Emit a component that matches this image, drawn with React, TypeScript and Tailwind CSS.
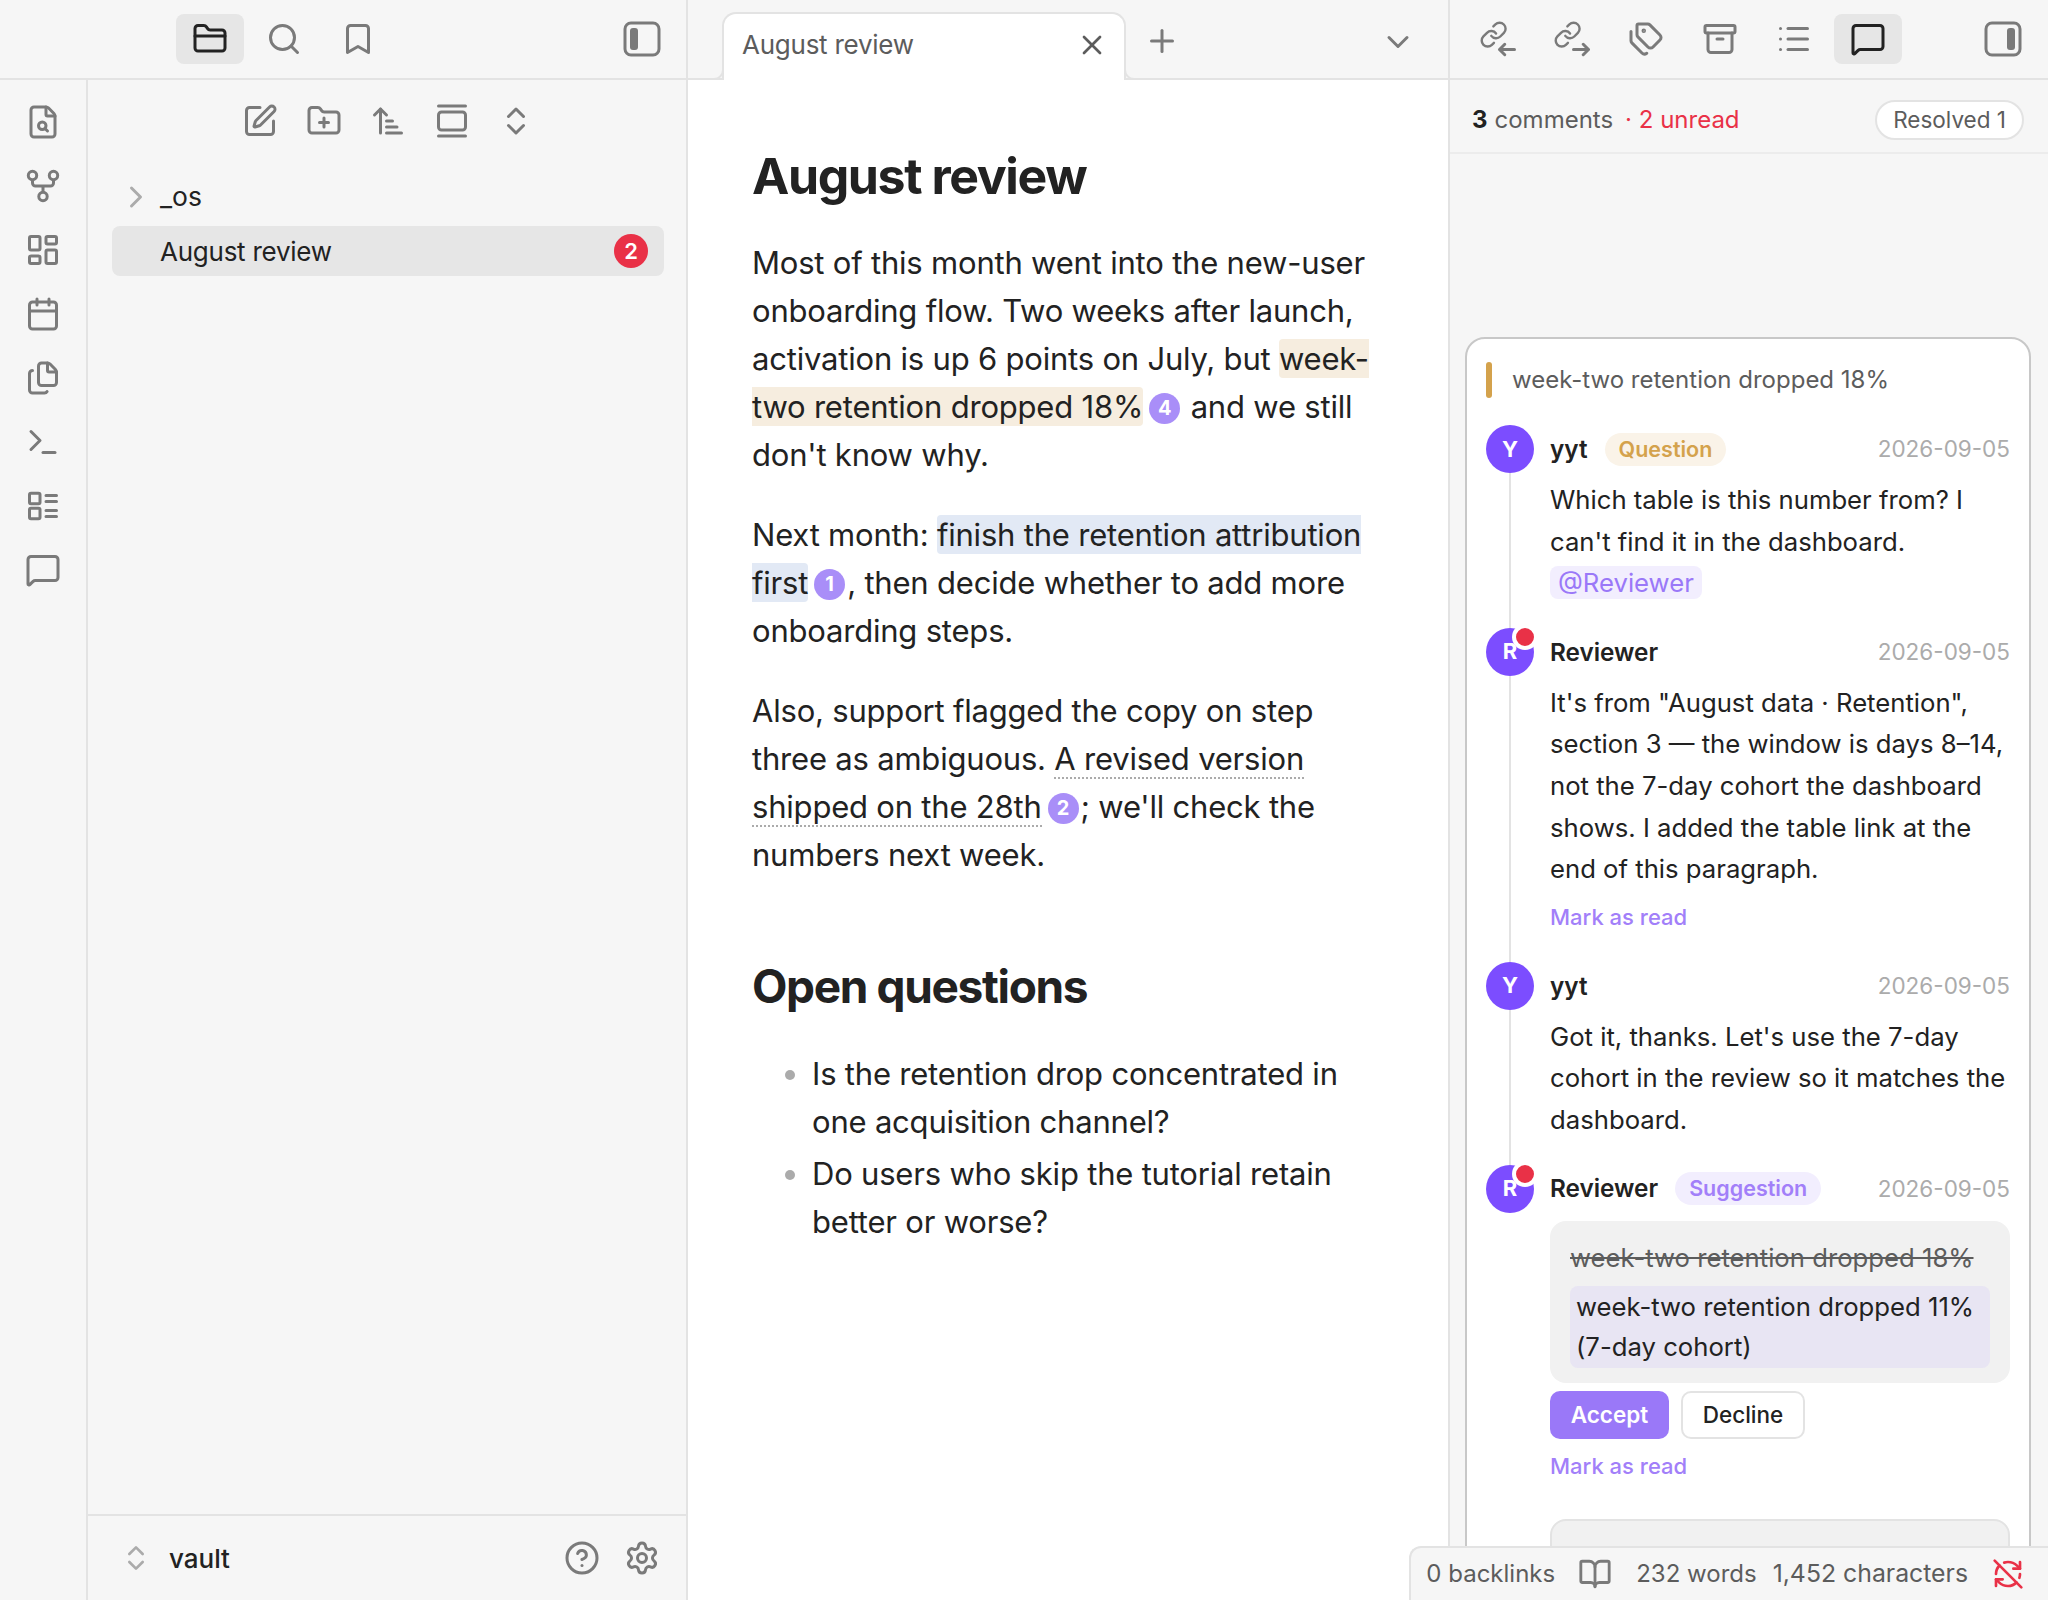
import React from "react";
import {
  FolderClosed, Search, Bookmark, FileSearch, LayoutDashboard, Calendar, Files, Terminal, MessageSquare,
  SquarePen, FolderPlus, ArrowUpNarrowWide, GalleryVertical, ChevronsUpDown, ChevronRight, X, Plus, ChevronDown,
  Tags, Archive, List, CircleHelp, Settings, BookOpen, RefreshCwOff,
} from "lucide-react";

const ic = "text-[#7a7a7a]";

function Toggle({ right }: { right?: boolean }) {
  return (
    <svg width="38" height="36" viewBox="0 0 38 36" fill="none" className={ic}>
      <rect x="2" y="2" width="34" height="32" rx="6" stroke="currentColor" strokeWidth="3" />
      <rect x={right ? 23 : 7} y="7" width="8" height="22" rx="3" fill="currentColor" />
    </svg>
  );
}

function Graph() {
  return (
    <svg width="36" height="36" viewBox="0 0 24 24" fill="none" stroke="currentColor" strokeWidth="2" className={ic}>
      <circle cx="5" cy="5" r="2.8" />
      <circle cx="19" cy="5" r="2.8" />
      <circle cx="12" cy="19" r="2.8" />
      <path d="M5 8v2a2 2 0 0 0 2 2h10a2 2 0 0 0 2-2V8M12 12v4" />
    </svg>
  );
}

function Outline() {
  return (
    <svg width="36" height="36" viewBox="0 0 24 24" fill="none" stroke="currentColor" strokeWidth="2" strokeLinecap="round" className={ic}>
      <rect x="3" y="3.5" width="7" height="7" rx="1" />
      <rect x="3" y="13.5" width="7" height="7" rx="1" />
      <path d="M14 5h7M14 9h7M14 15h7M14 19h7" />
    </svg>
  );
}

function LinkArrow({ out }: { out?: boolean }) {
  return (
    <svg width="36" height="36" viewBox="0 0 24 24" fill="none" stroke="currentColor" strokeWidth="2" strokeLinecap="round" strokeLinejoin="round" className={ic}>
      <g transform="translate(-0.5 -0.5) scale(0.8)">
        <path d="M10 13a5 5 0 0 0 7.54.54l3-3a5 5 0 0 0-7.07-7.07l-1.72 1.71" />
        <path d="M14 11a5 5 0 0 0-7.54-.54l-3 3a5 5 0 0 0 7.07 7.07l1.71-1.71" />
      </g>
      {out ? <path d="M13 19h10M19.5 15.5 23 19l-3.500 3.500" /> : <path d="M23 19H13M16.500 15.500 13 19l3.500 3.500" />}
    </svg>
  );
}

function HeadBtn({ active, children }: { active?: boolean; children: React.ReactNode }) {
  return (
    <div className={"flex h-[50px] w-[68px] items-center justify-center rounded-[8px] " + (active ? "bg-[#e6e6e6]" : "")}>
      {children}
    </div>
  );
}

function Badge({ n }: { n: number }) {
  return (
    <span className="ml-[6px] mr-[2px] inline-flex h-[31px] w-[31px] items-center justify-center rounded-full bg-[#a98ef8] align-[3px] text-[20px] font-bold leading-none tracking-normal text-white">
      {n}
    </span>
  );
}

function Avatar({ letter, unread, line }: { letter: string; unread?: boolean; line?: boolean }) {
  return (
    <div className="flex w-[48px] shrink-0 flex-col items-center">
      <div className="relative flex h-[48px] w-[48px] shrink-0 items-center justify-center rounded-full bg-[#7c4dff] text-[22px] font-bold text-white">
        {letter}
        {unread && (
          <span className="absolute right-[-4px] top-[-4px] h-[26px] w-[26px] rounded-full border-[4px] border-white bg-[#e93147]" />
        )}
      </div>
      {line && <div className="w-[2px] grow bg-[#e3e3e3]" />}
    </div>
  );
}

function Head({ name, tag, tagCls }: { name: string; tag?: string; tagCls?: string }) {
  return (
    <div className="flex h-[48px] items-center">
      <span className="text-[24.300px] font-semibold text-[#222222]">{name}</span>
      {tag && (
        <span className={"ml-[17px] flex h-[33px] items-center rounded-full px-[14px] text-[21.500px] font-semibold " + tagCls}>{tag}</span>
      )}
      <span className="ml-auto text-[22.500px] text-[#ababab]">2026-09-05</span>
    </div>
  );
}

function MarkRead() {
  return <div className="mt-[12px] text-[22px] font-medium leading-[30px] text-[#a27ff9]">Mark as read</div>;
}

const body = "mt-[6px] text-[25.700px] leading-[41.600px] text-[#222222]";

export default function App() {
  return (
    <div className="relative flex h-[1600px] w-[2048px] overflow-hidden bg-[#f6f6f6] [font-family:Inter,sans-serif] text-[#222222]">
      {/* Left column */}
      <div className="flex w-[688px] shrink-0 flex-col border-r-[2px] border-[#e3e3e3]">
        <div className="flex h-[80px] shrink-0 items-center border-b-[2px] border-[#e3e3e3] pl-[176px] pr-[25px]">
          <div className="flex items-center gap-[6px]">
            <HeadBtn active><FolderClosed size={36} className="text-[#222222]" strokeWidth={2} /></HeadBtn>
            <HeadBtn><Search size={36} className={ic} /></HeadBtn>
            <HeadBtn><Bookmark size={36} className={ic} /></HeadBtn>
          </div>
          <div className="ml-auto"><Toggle /></div>
        </div>
        <div className="flex min-h-0 grow">
          <div className="flex w-[88px] shrink-0 flex-col items-center gap-[28px] border-r-[2px] border-[#e3e3e3] pt-[24px]">
            <FileSearch size={36} className={ic} />
            <Graph />
            <LayoutDashboard size={36} className={ic} />
            <Calendar size={36} className={ic} />
            <Files size={36} className={ic} />
            <Terminal size={36} className={ic} />
            <Outline />
            <MessageSquare size={36} className={ic} />
          </div>
          <div className="flex min-w-0 grow flex-col">
            <div className="flex h-[82px] shrink-0 items-center justify-center gap-[28px] pl-[2px]">
              <SquarePen size={36} className={ic} />
              <FolderPlus size={36} className={ic} />
              <ArrowUpNarrowWide size={36} className={ic} />
              <GalleryVertical size={36} className={ic} />
              <ChevronsUpDown size={36} className={ic} />
            </div>
            <div className="grow pl-[24px] pr-[22px] pt-[10px]">
              <div className="flex h-[50px] items-center">
                <ChevronRight size={36} className="ml-[6px] text-[#ababab]" />
                <span className="ml-[6px] text-[26.500px] text-[#222222]">_os</span>
              </div>
              <div className="mt-[4px] flex h-[50px] items-center rounded-[8px] bg-[#e6e6e6] pl-[48px] pr-[16px]">
                <span className="text-[26px] tracking-[-0.250px] text-[#222222]">August review</span>
                <span className="ml-auto flex h-[34px] w-[34px] items-center justify-center rounded-full bg-[#e93147] text-[22px] font-semibold text-white">2</span>
              </div>
            </div>
            <div className="flex h-[86px] shrink-0 items-center border-t-[2px] border-[#e3e3e3] pl-[32px] pr-[26px]">
              <ChevronsUpDown size={32} className="text-[#ababab]" />
              <span className="ml-[17px] text-[26px] font-medium text-[#222222]">vault</span>
              <CircleHelp size={36} className={"ml-auto " + ic} />
              <Settings size={36} className={"ml-[24px] " + ic} />
            </div>
          </div>
        </div>
      </div>

      {/* Center column */}
      <div className="flex w-[760px] shrink-0 flex-col bg-white">
        <div className="flex h-[80px] shrink-0 items-end border-b-[2px] border-[#e3e3e3] bg-[#f6f6f6] pl-[34px]">
          <div className="relative z-10 mb-[-2px] flex h-[68px] w-[404px] items-center rounded-t-[14px] border-x-[2px] border-t-[2px] border-[#e3e3e3] bg-white pb-[5px] pl-[18px] pr-[16px]">
            <span className="text-[26px] tracking-[-0.250px] text-[#5c5c5c]">August review</span>
            <X size={32} className="ml-auto text-[#5c5c5c]" />
            <span className="absolute bottom-0 left-[-12px] h-[12px] w-[12px] rounded-br-[10px] border-b-[2px] border-r-[2px] border-[#e3e3e3] bg-[#f6f6f6]" />
            <span className="absolute bottom-0 right-[-12px] h-[12px] w-[12px] rounded-bl-[10px] border-b-[2px] border-l-[2px] border-[#e3e3e3] bg-[#f6f6f6]" />
          </div>
          <div className="mb-[19px] ml-[18px]"><Plus size={36} className={ic} /></div>
          <div className="mb-[18px] ml-auto mr-[32px]"><ChevronDown size={36} className={ic} /></div>
        </div>
        <div className="grow pl-[64px] pr-[64px] pt-[65px]">
          <h1 className="text-[50px] font-bold leading-[62px] tracking-[-1.400px] text-[#222222]">August review</h1>
          <div className="mt-[32px] text-[31px] leading-[48px] tracking-[-0.200px] text-[#222222]">
            <p>
              Most of this month went into the new-user onboarding flow. Two weeks after launch, activation is up 6 points on July, but{" "}
              <span className="rounded-[4px] bg-[#f6eddf] py-[1px]">week-two retention dropped 18%</span>
              <Badge n={4} /> and we still don't know why.
            </p>
            <p className="mt-[32px]">
              Next month: <span className="rounded-[4px] bg-[#e2e9f5] py-[1px]">finish the retention attribution first</span>
              <Badge n={1} />, then decide whether to add more onboarding steps.
            </p>
            <p className="mt-[32px]">
              Also, support flagged the copy on step three as ambiguous.{" "}
              <span className="border-b-[2px] border-dotted border-[#ababab]">A revised version shipped on the 28th</span>
              <Badge n={2} />; we'll check the numbers next week.
            </p>
          </div>
          <h2 className="mt-[77px] text-[46px] font-bold leading-[60px] tracking-[-1.350px] text-[#222222]">Open questions</h2>
          <ul className="ml-[60px] mt-[34px] list-disc text-[31px] leading-[48px] tracking-[-0.200px] text-[#222222] marker:text-[#ababab]">
            <li>Is the retention drop concentrated in one acquisition channel?</li>
            <li className="mt-[4px]">Do users who skip the tutorial retain better or worse?</li>
          </ul>
        </div>
      </div>

      {/* Right column */}
      <div className="flex min-w-0 grow flex-col border-l-[2px] border-[#e3e3e3]">
        <div className="flex h-[80px] shrink-0 items-center border-b-[2px] border-[#e3e3e3] pl-[14px] pr-[26px]">
          <div className="flex items-center gap-[6px]">
            <HeadBtn><LinkArrow /></HeadBtn>
            <HeadBtn><LinkArrow out /></HeadBtn>
            <HeadBtn><Tags size={36} className={ic} /></HeadBtn>
            <HeadBtn><Archive size={36} className={ic} /></HeadBtn>
            <HeadBtn><List size={36} className={ic} /></HeadBtn>
            <HeadBtn active><MessageSquare size={36} className="text-[#222222]" /></HeadBtn>
          </div>
          <div className="ml-auto"><Toggle right /></div>
        </div>
        <div className="flex h-[74px] shrink-0 items-center border-b-[2px] border-[#ececec] pl-[22px] pr-[24px] pt-[8px]">
          <span className="text-[24px] font-bold text-[#222222]">3</span>
          <span className="ml-[7px] text-[24px] text-[#5c5c5c]">comments</span>
          <span className="ml-[12px] text-[24px] text-[#e93147]">· 2 unread</span>
          <span className="ml-auto flex h-[40px] items-center rounded-full border-[2px] border-[#e3e3e3] bg-white px-[16px] text-[22.500px] text-[#5c5c5c]">Resolved 1</span>
        </div>
        <div className="min-h-0 grow overflow-hidden pl-[15px] pr-[17px] pt-[183px]">
          <div className="h-[1400px] rounded-[20px] border-[2px] border-[#c8c8c8] bg-white px-[19px] pt-[23px]">
            <div className="flex h-[36px] items-center">
              <div className="h-[36px] w-[6px] rounded-full bg-[#d4a24c]" />
              <span className="ml-[20px] text-[24px] text-[#5c5c5c]">week-two retention dropped 18%</span>
            </div>

            <div className="mt-[27px] flex gap-[16px]">
              <Avatar letter="Y" line />
              <div className="min-w-0 grow pb-[24px]">
                <Head name="yyt" tag="Question" tagCls="bg-[#faf3e8] text-[#d4a24c]" />
                <div className={body}>
                  Which table is this number from? I can't find it in the dashboard.{" "}
                  <span className="rounded-[8px] bg-[#f2eefe] px-[8px] py-[1px] text-[#9a78f8]">@Reviewer</span>
                </div>
              </div>
            </div>

            <div className="flex gap-[16px]">
              <Avatar letter="R" unread line />
              <div className="min-w-0 grow pb-[30px]">
                <Head name="Reviewer" />
                <div className={body}>
                  It's from "August data · Retention", section 3 — the window is days 8–14, not the 7-day cohort the dashboard shows. I added the table link at the end of this paragraph.
                </div>
                <MarkRead />
              </div>
            </div>

            <div className="flex gap-[16px]">
              <Avatar letter="Y" line />
              <div className="min-w-0 grow pb-[24px]">
                <Head name="yyt" />
                <div className={body}>
                  Got it, thanks. Let's use the 7-day cohort in the review so it matches the dashboard.
                </div>
              </div>
            </div>

            <div className="flex gap-[16px]">
              <Avatar letter="R" unread />
              <div className="min-w-0 grow">
                <Head name="Reviewer" tag="Suggestion" tagCls="bg-[#f2eefe] text-[#a27ff9]" />
                <div className="mt-[8px] rounded-[16px] bg-[#f1f1f1] px-[20px] pb-[15px] pt-[18px] text-[25.700px] leading-[38px]">
                  <div className="text-[#5c5c5c] line-through">week-two retention dropped 18%</div>
                  <div className="mt-[9px] rounded-[8px] bg-[#e8e5f3] px-[6px] py-[1px] leading-[40px] text-[#222222]">
                    week-two retention dropped 11% (7-day cohort)
                  </div>
                </div>
                <div className="mt-[8px] flex gap-[12px]">
                  <div className="flex h-[48px] w-[119px] items-center justify-center rounded-[10px] bg-[#9a78f8] text-[22.500px] font-semibold text-white">Accept</div>
                  <div className="flex h-[48px] w-[124px] items-center justify-center rounded-[10px] border-[2px] border-[#e3e3e3] bg-white text-[22.500px] font-medium text-[#222222]">Decline</div>
                </div>
                <MarkRead />
                <div className="mt-[38px] h-[120px] rounded-[16px] border-[2px] border-[#e3e3e3] bg-[#f1f1f1]" />
              </div>
            </div>
          </div>
        </div>
      </div>

      {/* Status bar */}
      <div className="absolute bottom-0 right-0 flex h-[54px] items-center rounded-tl-[12px] border-l-[2px] border-t-[2px] border-[#e3e3e3] bg-[#f6f6f6] pl-[15px] pr-[24px] text-[#5c5c5c]">
        <span className="text-[24px]">0 backlinks</span>
        <BookOpen size={34} className={"ml-[23px] " + ic} />
        <span className="ml-[24px] text-[24px]">232 words</span>
        <span className="ml-[16px] text-[24.800px]">1,452 characters</span>
        <RefreshCwOff size={32} className="ml-[24px] text-[#e93147]" />
      </div>
    </div>
  );
}
